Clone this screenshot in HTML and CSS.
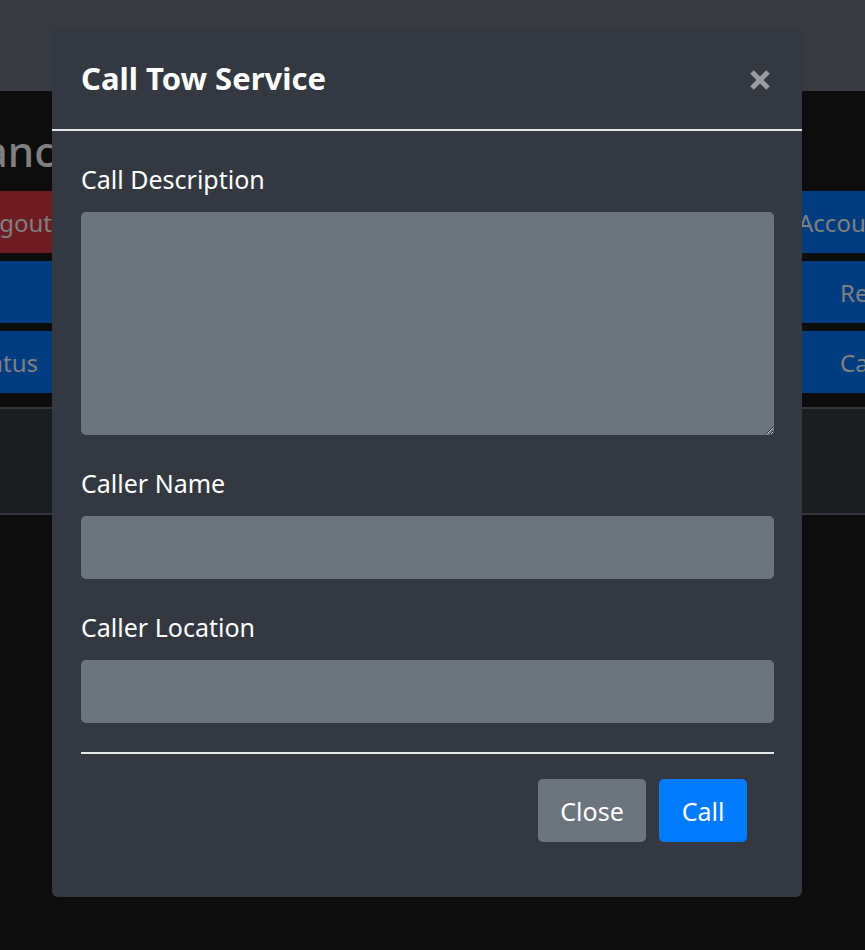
FILE: index.html
```
<!DOCTYPE html>
<html>
<head>
<meta charset="utf-8">
<link rel="stylesheet" href="styles.css">
</head>
<body>
<div class="page">
  <div class="topbar"></div>
  <div class="heading"><span class="heading-text">Finance</span></div>
  <div class="btn-row">
    <div class="pbtn pbtn-left red"><span>Logout</span></div>
    <div class="pbtn pbtn-right blue pad-a"><span>Account</span></div>
  </div>
  <div class="btn-row">
    <div class="pbtn pbtn-left blue"><span></span></div>
    <div class="pbtn pbtn-right blue pad-b"><span>Reports</span></div>
  </div>
  <div class="btn-row">
    <div class="pbtn pbtn-left pbtn-left-narrow blue"><span>Set Status</span></div>
    <div class="pbtn pbtn-right blue pad-b"><span>Calls</span></div>
  </div>
  <div class="band"></div>
</div>

<div class="modal">
  <div class="modal-header">
    <h5 class="modal-title">Call Tow Service</h5>
    <button class="close-btn" aria-label="Close">
      <svg width="22" height="22" viewBox="0 0 22 22"><path d="M3 3 L19 19 M19 3 L3 19" stroke="#9a9ea3" stroke-width="5" fill="none"/></svg>
    </button>
  </div>
  <div class="modal-body">
    <label class="field-label">Call Description</label>
    <textarea class="field field-area"></textarea>
    <label class="field-label">Caller Name</label>
    <input class="field field-input" type="text">
    <label class="field-label">Caller Location</label>
    <input class="field field-input" type="text">
    <div class="modal-footer">
      <button class="mbtn mbtn-secondary">Close</button>
      <button class="mbtn mbtn-primary">Call</button>
    </div>
  </div>
</div>
</body>
</html>
```
FILE: styles.css
```
html, body {
  margin: 0;
  padding: 0;
}
body {
  width: 865px;
  height: 950px;
  overflow: hidden;
  background: #0d0d0d;
  font-family: "Noto Sans", "Open Sans", sans-serif;
  position: relative;
}
.page {
  display: flex;
  flex-direction: column;
}
.topbar {
  height: 91px;
  background: #373a3f;
}
.heading {
  height: 100px;
  box-sizing: border-box;
  padding-top: 33px;
  overflow: hidden;
}
.heading-text {
  display: block;
  margin-left: -76px;
  font-size: 42px;
  line-height: 53px;
  font-weight: 500;
  color: #808080;
  white-space: nowrap;
}
.btn-row {
  height: 62px;
  margin-bottom: 8px;
  display: flex;
  justify-content: space-between;
}
.pbtn {
  height: 62px;
  display: flex;
  align-items: center;
  font-size: 24px;
  color: #808080;
  white-space: nowrap;
  overflow: hidden;
}
.pbtn-left {
  width: 60px;
  justify-content: flex-end;
  padding-right: 8px;
  box-sizing: border-box;
}
.pbtn-left-narrow {
  padding-right: 22px;
}
.pbtn-right {
  width: 67px;
  justify-content: flex-start;
  box-sizing: border-box;
}
.pad-a { padding-left: 0; }
.pad-b { padding-left: 42px; }
.red { background: #6e1b22; }
.blue { background: #003d80; }
.band {
  margin-top: 6px;
  height: 104px;
  background: #1b1e20;
  border-top: 2px solid #33363a;
  border-bottom: 2px solid #33363a;
}

.modal {
  position: absolute;
  left: 52px;
  top: 28px;
  width: 750px;
  height: 869px;
  background: #343941;
  border-radius: 6px;
  box-sizing: border-box;
}
.modal-header {
  height: 101px;
  border-bottom: 2px solid #e6e6e6;
  display: flex;
  align-items: center;
  justify-content: space-between;
  padding: 0 31px 0 29px;
}
.modal-title {
  margin: 0;
  font-size: 31px;
  font-weight: 700;
  color: #ffffff;
  line-height: 1.2;
}
.close-btn {
  background: none;
  border: none;
  padding: 0;
  width: 22px;
  height: 22px;
  display: flex;
  margin-top: 2px;
}
.modal-body {
  padding: 30px 28px 0 29px;
  display: flex;
  flex-direction: column;
}
.field-label {
  display: block;
  font-size: 25px;
  line-height: 36px;
  color: #ffffff;
  margin-bottom: 15px;
}
.field {
  display: block;
  width: 100%;
  box-sizing: border-box;
  background: #6c757d;
  border: none;
  border-radius: 5px;
  margin: 0 0 30px 0;
  font-family: inherit;
  font-size: 24px;
  color: #ffffff;
  outline: none;
}
.field-area {
  height: 223px;
  resize: vertical;
  margin-bottom: 30px;
}
.field-input {
  height: 63px;
}
.modal-footer {
  border-top: 2px solid #e6e6e6;
  margin-top: -1px;
  padding-top: 25px;
  display: flex;
  justify-content: flex-end;
  gap: 13px;
  padding-right: 27px;
}
.mbtn {
  height: 63px;
  border: none;
  border-radius: 5px;
  font-family: inherit;
  font-size: 25px;
  color: #ffffff;
  padding: 0 22.5px;
}
.mbtn-secondary {
  background: #6c757d;
}
.mbtn-primary {
  background: #007bff;
}
```
